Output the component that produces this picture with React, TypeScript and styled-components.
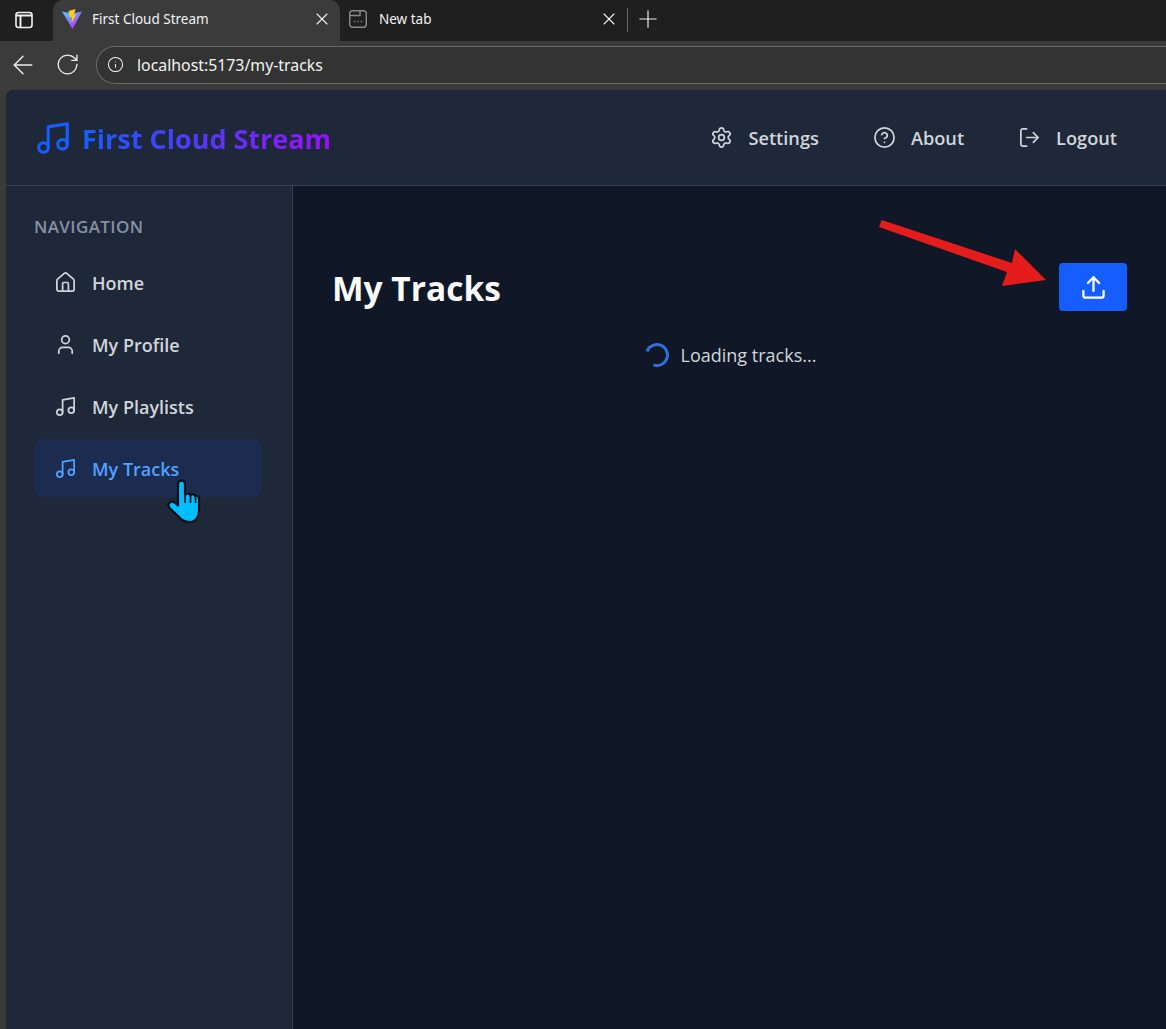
import React from "react";
import styled, { createGlobalStyle } from "styled-components";
import {
  ArrowLeft,
  CircleHelp,
  House,
  Info,
  LogOut,
  Music,
  Plus,
  RotateCw,
  Settings,
  Upload,
  User,
  X,
} from "lucide-react";

const GlobalStyle = createGlobalStyle`
  html, body {
    margin: 0;
    height: 100%;
    background: #3b3b3b;
    overflow: hidden;
  }
  body {
    font-family: "Open Sans", "Noto Sans", "Liberation Sans", sans-serif;
  }
  * {
    box-sizing: border-box;
  }
`;

const Screen = styled.div`
  position: relative;
  width: 1166px;
  height: 1029px;
  display: flex;
  flex-direction: column;
  overflow: hidden;
`;

/* browser chrome */
const TabStrip = styled.div`
  height: 41px;
  flex: none;
  background: #1f1f1f;
  display: flex;
  align-items: flex-end;
  padding-left: 15px;
`;

const PanelButton = styled.div`
  width: 38px;
  height: 41px;
  padding-bottom: 2px;
  display: flex;
  align-items: center;
  color: #f0f0f0;
`;

const Tab = styled.div<{ $active?: boolean }>`
  width: 287px;
  height: 41px;
  display: flex;
  align-items: center;
  padding: 0 8px 3px 9px;
  border-radius: 10px 10px 0 0;
  background: ${(p) => (p.$active ? "#3b3b3b" : "transparent")};
  color: #f2f2f2;
  font-size: 13.5px;
  font-family: "Noto Sans", "Open Sans", sans-serif;
`;

const TabTitle = styled.span`
  flex: 1;
  margin-left: 10px;
  white-space: nowrap;
`;

const Divider = styled.div`
  width: 1px;
  height: 24px;
  background: #666;
  margin: 0 6px 9px 0;
  align-self: flex-end;
`;

const NewTab = styled.div`
  height: 41px;
  padding-bottom: 3px;
  display: flex;
  align-items: center;
  color: #f0f0f0;
`;

const Toolbar = styled.div`
  height: 49px;
  flex: none;
  background: #3b3b3b;
  display: flex;
  align-items: center;
  padding: 0 0 2px 8px;
  color: #eee;
`;

const ToolbarSlot = styled.div<{ $width: number }>`
  width: ${(p) => p.$width}px;
  flex: none;
  display: flex;
  align-items: center;
`;

const AddressBar = styled.div`
  flex: 1;
  height: 38px;
  border: 1px solid #6b6b6b;
  border-right: none;
  border-radius: 19px 0 0 19px;
  background: #333;
  display: flex;
  align-items: center;
  gap: 13px;
  padding-left: 10px;
  color: #f2f2f2;
  font-size: 15.85px;
  font-family: "Noto Sans", "Open Sans", sans-serif;
`;

/* app */
const AppFrame = styled.div`
  flex: 1;
  margin-left: 6px;
  border-radius: 8px 0 0 0;
  overflow: hidden;
  display: flex;
  flex-direction: column;
  background: #101827;
`;

const Header = styled.header`
  height: 96px;
  flex: none;
  background: #1e2838;
  border-bottom: 1px solid #374151;
  display: flex;
  align-items: center;
  justify-content: space-between;
  padding: 0 49px 0 28px;
`;

const Brand = styled.div`
  display: flex;
  align-items: center;
  gap: 10px;
  color: #155dfc;
`;

const BrandName = styled.span`
  padding-top: 2px;
  font-size: 27px;
  font-weight: 700;
  white-space: nowrap;
  background: linear-gradient(90deg, #155dfc, #9810fa);
  -webkit-background-clip: text;
  background-clip: text;
  color: transparent;
`;

const HeaderNav = styled.nav`
  display: flex;
  align-items: center;
  gap: 54px;
`;

const HeaderLink = styled.div`
  display: flex;
  align-items: center;
  gap: 15px;
  color: #d1d5db;
  font-size: 18.2px;
  font-weight: 600;
`;

const Body = styled.div`
  flex: 1;
  display: flex;
  min-height: 0;
`;

const Sidebar = styled.aside`
  width: 287px;
  flex: none;
  background: #1e2838;
  border-right: 1px solid #374151;
  padding: 30px 30px 0 28px;
`;

const SideTitle = styled.h3`
  margin: 0 0 15px;
  color: #8491a5;
  font-size: 17px;
  line-height: 22px;
  font-weight: 600;
  letter-spacing: 0.4px;
`;

const SideItem = styled.div<{ $active?: boolean }>`
  height: 58px;
  margin-bottom: 4px;
  display: flex;
  align-items: center;
  gap: 15px;
  padding: 1px 0 0 20px;
  border-radius: 8px;
  font-size: 18px;
  font-weight: 600;
  color: ${(p) => (p.$active ? "#51a2ff" : "#d1d5db")};
  background: ${(p) => (p.$active ? "#1c2b50" : "transparent")};
`;

const Main = styled.main`
  flex: 1;
  padding: 77px 39px 0 39px;
`;

const TitleRow = styled.div`
  display: flex;
  align-items: center;
  justify-content: space-between;
`;

const PageTitle = styled.h1`
  margin: 0;
  padding-top: 2px;
  color: #f9fafb;
  font-size: 33.5px;
  font-weight: 700;
  line-height: 46px;
`;

const UploadButton = styled.button`
  width: 68px;
  height: 48px;
  border: none;
  border-radius: 4px;
  background: #155dfc;
  color: #fff;
  display: flex;
  align-items: center;
  justify-content: center;
`;

const LoadingRow = styled.div`
  margin-top: 25px;
  display: flex;
  align-items: center;
  justify-content: center;
  gap: 12px;
  padding-left: 2px;
  color: #d1d5db;
  font-size: 18px;
  line-height: 38px;
`;

const Spinner = styled.div`
  width: 24px;
  height: 24px;
  border-radius: 50%;
  border: 3px solid #2f6fdc;
  border-left-color: transparent;
  transform: rotate(-25deg);
`;

/* annotations drawn over the screenshot */
const ArrowMark = styled.svg`
  position: absolute;
  left: 875px;
  top: 215px;
`;

const HandCursor = styled.svg`
  position: absolute;
  left: 166px;
  top: 478px;
`;

const ViteLogo = () => (
  <svg width="20" height="22" viewBox="0 0 20 22">
    <defs>
      <linearGradient id="viteA" x1="0" y1="0" x2="0.6" y2="1">
        <stop offset="0" stopColor="#41d1ff" />
        <stop offset="1" stopColor="#bd34fe" />
      </linearGradient>
    </defs>
    <path d="M0 3.5 L10 5.5 L20 3.5 L10.5 21 Z" fill="url(#viteA)" />
    <path d="M6.5 3 L13.5 1 L12 7 L14.5 6.5 L9.5 15 L10 9 L7.5 9.5 Z" fill="#ffc91f" />
  </svg>
);

const BlankTabIcon = () => (
  <svg width="20" height="20" viewBox="0 0 20 20" fill="none" stroke="#8a8a8a" strokeWidth="1.4">
    <rect x="0.7" y="1.7" width="16.6" height="16.6" rx="3" />
    <path d="M0.7 6.5 H11 V1.7" />
    <path d="M5 12.5h1.2M8.4 12.5h1.2M11.8 12.5h1.2" />
  </svg>
);

const PanelIcon = () => (
  <svg width="18" height="18" viewBox="0 0 18 18" fill="none" stroke="currentColor" strokeWidth="1.6">
    <rect x="1" y="1.5" width="16" height="15" rx="2.5" />
    <path d="M1 4.5 H17 M5.5 4.5 V16.5" strokeWidth="1.9" />
  </svg>
);

const navItems = [
  { label: "Home", icon: House },
  { label: "My Profile", icon: User },
  { label: "My Playlists", icon: Music },
  { label: "My Tracks", icon: Music, active: true },
];

const headerLinks = [
  { label: "Settings", icon: Settings },
  { label: "About", icon: CircleHelp },
  { label: "Logout", icon: LogOut },
];

const App = () => {
  return (
    <Screen>
      <GlobalStyle />
      <TabStrip>
        <PanelButton>
          <PanelIcon />
        </PanelButton>
        <Tab $active>
          <ViteLogo />
          <TabTitle>First Cloud Stream</TabTitle>
          <X size={20} strokeWidth={1.3} />
        </Tab>
        <Tab>
          <BlankTabIcon />
          <TabTitle>New tab</TabTitle>
          <X size={20} strokeWidth={1.3} />
        </Tab>
        <Divider />
        <NewTab>
          <Plus size={28} strokeWidth={1} />
        </NewTab>
      </TabStrip>
      <Toolbar>
        <ToolbarSlot $width={47}>
          <ArrowLeft size={30} strokeWidth={1.1} />
        </ToolbarSlot>
        <ToolbarSlot $width={41}>
          <RotateCw size={25} strokeWidth={1.3} />
        </ToolbarSlot>
        <AddressBar>
          <Info size={17} strokeWidth={1.5} />
          <span>localhost:5173/my-tracks</span>
        </AddressBar>
      </Toolbar>
      <AppFrame>
        <Header>
          <Brand>
            <Music size={38} strokeWidth={2} />
            <BrandName>First Cloud Stream</BrandName>
          </Brand>
          <HeaderNav>
            {headerLinks.map(({ label, icon: Icon }) => (
              <HeaderLink key={label}>
                <Icon size={23} strokeWidth={1.8} />
                {label}
              </HeaderLink>
            ))}
          </HeaderNav>
        </Header>
        <Body>
          <Sidebar>
            <SideTitle>NAVIGATION</SideTitle>
            {navItems.map(({ label, icon: Icon, active }) => (
              <SideItem key={label} $active={active}>
                <Icon size={23} strokeWidth={1.8} />
                {label}
              </SideItem>
            ))}
          </Sidebar>
          <Main>
            <TitleRow>
              <PageTitle>My Tracks</PageTitle>
              <UploadButton aria-label="Upload">
                <Upload size={27} strokeWidth={2} />
              </UploadButton>
            </TitleRow>
            <LoadingRow>
              <Spinner />
              <span>Loading tracks...</span>
            </LoadingRow>
          </Main>
        </Body>
      </AppFrame>

      <ArrowMark width="190" height="80" viewBox="0 0 190 80">
        <path d="M6.7 5 L4 12 L132 57 L127 71 L171 65 L140 34 L137 48 Z" fill="#e41c1c" />
      </ArrowMark>

      <HandCursor width="38" height="48" viewBox="0 0 38 48">
        <path
          d="M12 6 C12 1.5 19 1.5 19 6 L19 17 C21 15 24 15 24.5 17.5 C26 15.5 29 16 29.5 18.5 C31 17 33 18 33 21 L33 33 C33 38 30 44 24 44 C19 44 15 42 12 38 L3.5 30 C0.5 26 5 22 8.5 24.5 L12 27.5 Z"
          fill="#00bdfd"
          stroke="#06101c"
          strokeWidth="2.2"
          strokeLinejoin="round"
        />
        <path d="M19 17 V25 M24.5 17.5 V25 M29.5 18.5 V25" stroke="#06101c" strokeWidth="1.6" fill="none" />
      </HandCursor>
    </Screen>
  );
};

export default App;
